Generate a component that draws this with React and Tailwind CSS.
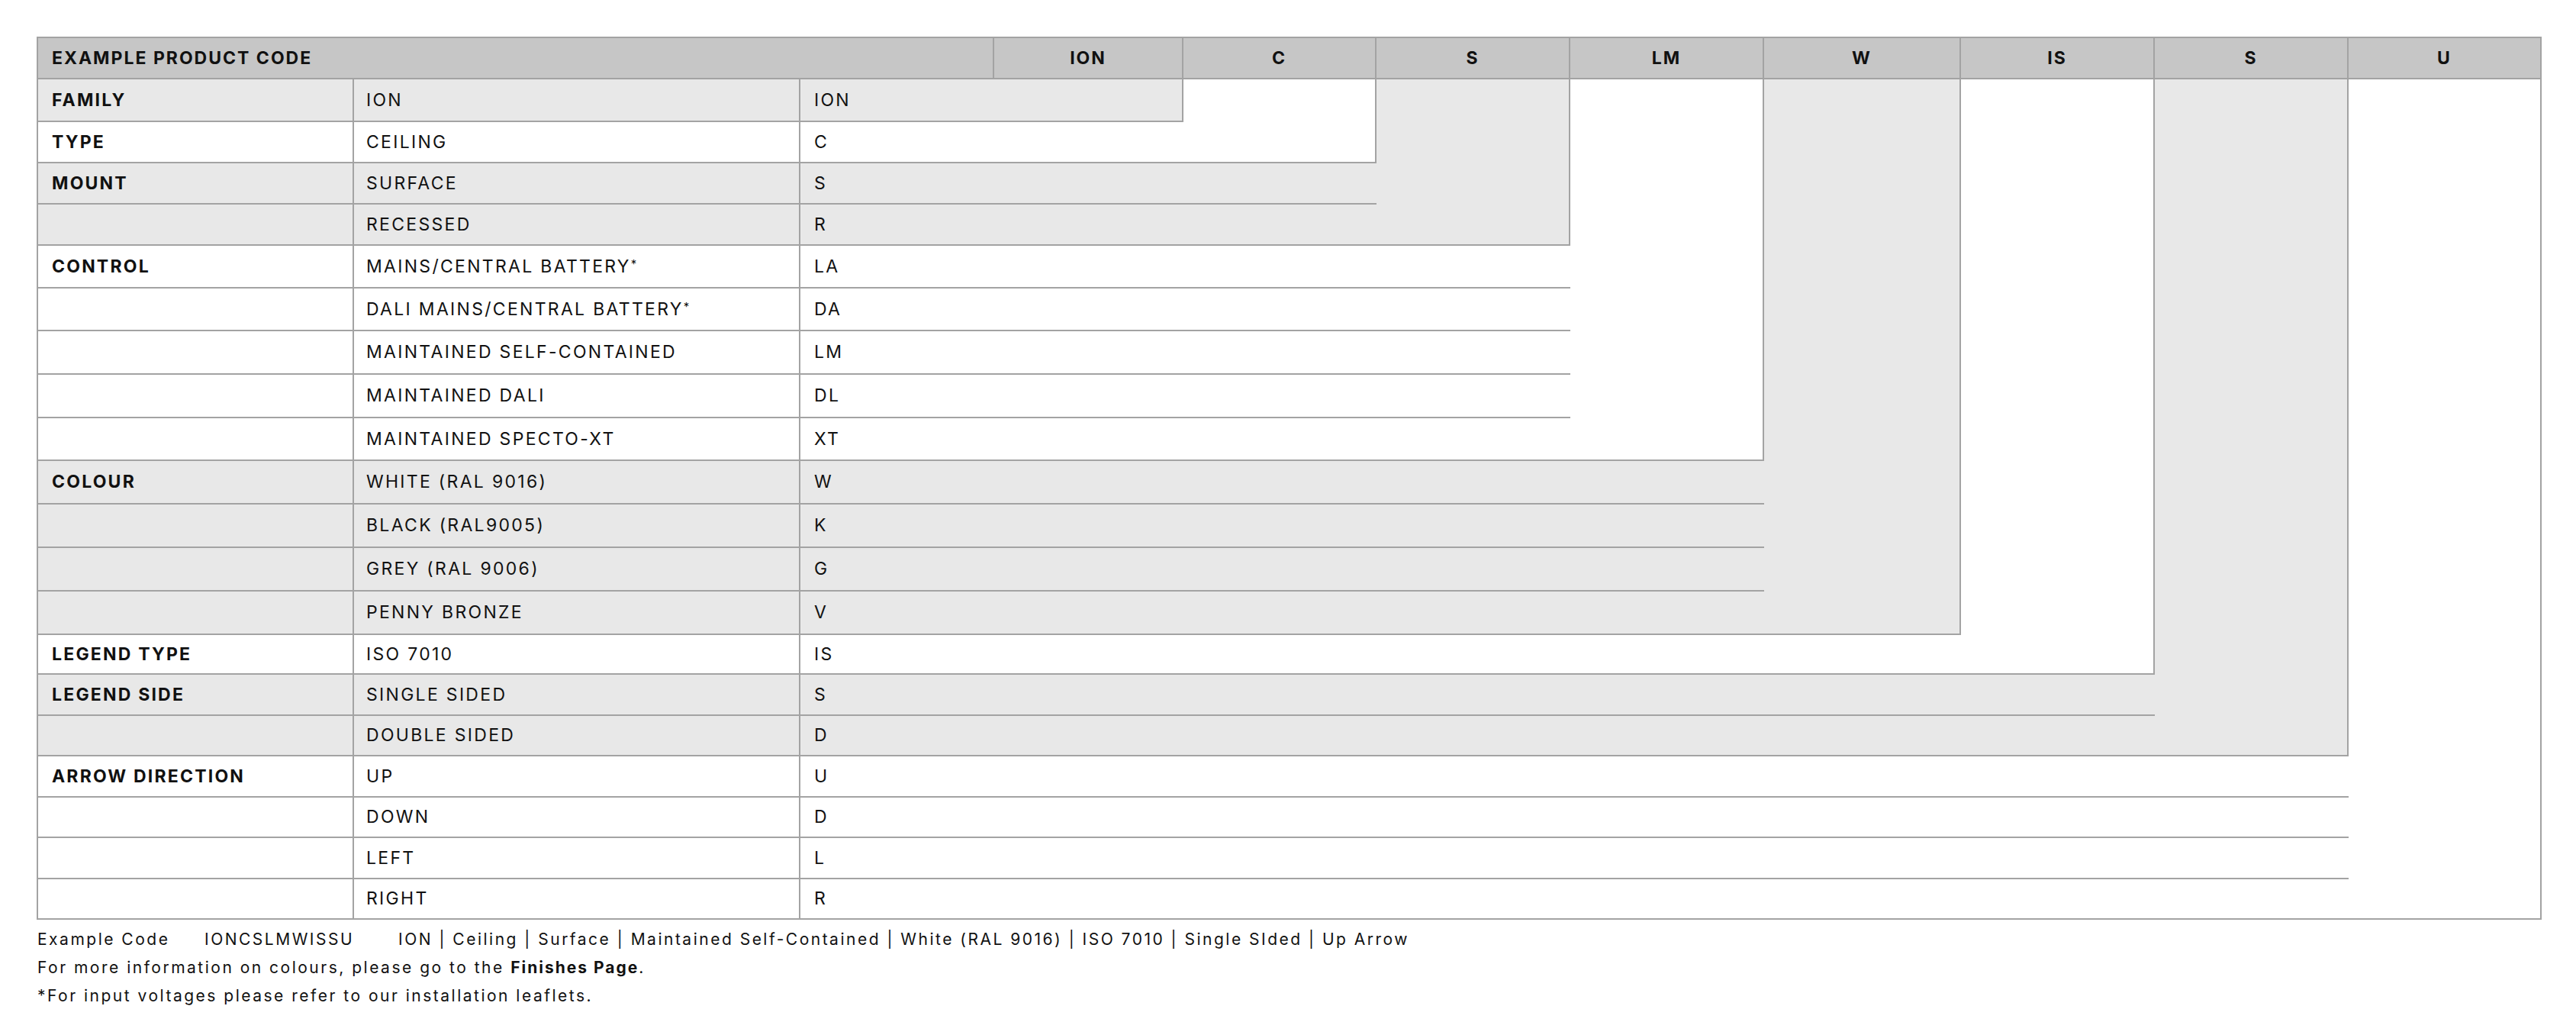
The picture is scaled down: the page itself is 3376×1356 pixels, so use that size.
import React from 'react'

const headerCodes = ['ION', 'C', 'S', 'LM', 'W', 'IS', 'S', 'U']

// each group steps one code column further right; strip = the column block above its rows
const groups = [
    {
        label: 'FAMILY', bg: 'bg-[#e8e8e8]', span: 'col-span-1',
        strip: 'col-start-4 row-start-2 row-end-3',
        rows: [['ION', 'ION']]
    },
    {
        label: 'TYPE', bg: 'bg-white', span: 'col-span-2',
        strip: 'col-start-5 row-start-2 row-end-4',
        rows: [['CEILING', 'C']]
    },
    {
        label: 'MOUNT', bg: 'bg-[#e8e8e8]', span: 'col-span-3',
        strip: 'col-start-6 row-start-2 row-end-6',
        rows: [['SURFACE', 'S'], ['RECESSED', 'R']]
    },
    {
        label: 'CONTROL', bg: 'bg-white', span: 'col-span-4',
        strip: 'col-start-7 row-start-2 row-end-11',
        rows: [
            ['MAINS/CENTRAL BATTERY', 'LA', true],
            ['DALI MAINS/CENTRAL BATTERY', 'DA', true],
            ['MAINTAINED SELF-CONTAINED', 'LM'],
            ['MAINTAINED DALI', 'DL'],
            ['MAINTAINED SPECTO-XT', 'XT']
        ]
    },
    {
        label: 'COLOUR', bg: 'bg-[#e8e8e8]', span: 'col-span-5',
        strip: 'col-start-8 row-start-2 row-end-15',
        rows: [
            ['WHITE (RAL 9016)', 'W'],
            ['BLACK (RAL9005)', 'K'],
            ['GREY (RAL 9006)', 'G'],
            ['PENNY BRONZE', 'V']
        ]
    },
    {
        label: 'LEGEND TYPE', bg: 'bg-white', span: 'col-span-6',
        strip: 'col-start-9 row-start-2 row-end-16',
        rows: [['ISO 7010', 'IS']]
    },
    {
        label: 'LEGEND SIDE', bg: 'bg-[#e8e8e8]', span: 'col-span-7',
        strip: 'col-start-10 row-start-2 row-end-18',
        rows: [['SINGLE SIDED', 'S'], ['DOUBLE SIDED', 'D']]
    },
    {
        label: 'ARROW DIRECTION', bg: 'bg-white', span: 'col-span-8',
        strip: 'col-start-11 row-start-2 row-end-22',
        rows: [['UP', 'U'], ['DOWN', 'D'], ['LEFT', 'L'], ['RIGHT', 'R']]
    }
]

const line = 'border-[#a3a3a3]'

const App = () => {
    return (
        <main className='min-h-screen w-full bg-white text-[#111] font-["Inter","Liberation_Sans",sans-serif]'>
            <div className='pl-[48px] pt-[48px]'>
                {/* Product code table */}
                <div className={`w-[3283px] border-l-2 border-t-2 ${line} grid grid-cols-[414px_585px_254px_248px_253px_254px_254px_258px_254px_254px_253px] grid-rows-[54px_56px_54px_54px_54px_56px_56px_57px_57px_56px_57px_57px_57px_57px_52px_54px_53px_54px_53px_54px_53px] text-[23px] tracking-[2.3px]`}>
                    {/* strips first so they claim their columns */}
                    {groups.map((group, index) => (
                        <div key={'strip' + index} className={`${group.strip} ${group.bg} border-r-2 border-b-2 ${line}`}></div>
                    ))}

                    <div className={`col-start-1 col-span-3 row-start-1 bg-[#c6c6c6] border-r-2 border-b-2 ${line} flex items-center pl-[18px] font-bold tracking-[2px]`}>
                        EXAMPLE PRODUCT CODE
                    </div>
                    {headerCodes.map((code, index) => (
                        <div key={'head' + index} className={`row-start-1 bg-[#c6c6c6] border-r-2 border-b-2 ${line} flex items-center justify-center font-bold tracking-[2px]`}>
                            {code}
                        </div>
                    ))}

                    {groups.map((group) =>
                        group.rows.map((row, i) => (
                            <React.Fragment key={group.label + i}>
                                <div className={`col-start-1 ${group.bg} border-r-2 border-b-2 ${line} flex items-center pl-[18px] font-bold tracking-[2.2px]`}>
                                    {i === 0 ? group.label : ''}
                                </div>
                                <div className={`${group.bg} border-r-2 border-b-2 ${line} flex items-center pl-[16px]`}>
                                    {row[0]}{row[2] && <span className='text-[15px] self-start mt-[13px]'>*</span>}
                                </div>
                                <div className={`${group.span} ${group.bg} border-b-2 ${line} flex items-center pl-[18px]`}>
                                    {row[1]}
                                </div>
                            </React.Fragment>
                        ))
                    )}
                </div>

                {/* Notes */}
                <div className='mt-[7px] pl-[1px] text-[21px] leading-[37px] tracking-[2.5px]'>
                    <div className='flex'>
                        <span className='w-[219px]'>Example Code</span>
                        <span className='w-[254px]'>IONCSLMWISSU</span>
                        <span>ION | Ceiling | Surface | Maintained Self-Contained | White (RAL 9016) | ISO 7010 | Single SIded | Up Arrow</span>
                    </div>
                    <p>For more information on colours, please go to the <span className='font-bold tracking-[2px]'>Finishes Page</span>.</p>
                    <p>*For input voltages please refer to our installation leaflets.</p>
                </div>
            </div>
        </main>
    )
}

export default App
